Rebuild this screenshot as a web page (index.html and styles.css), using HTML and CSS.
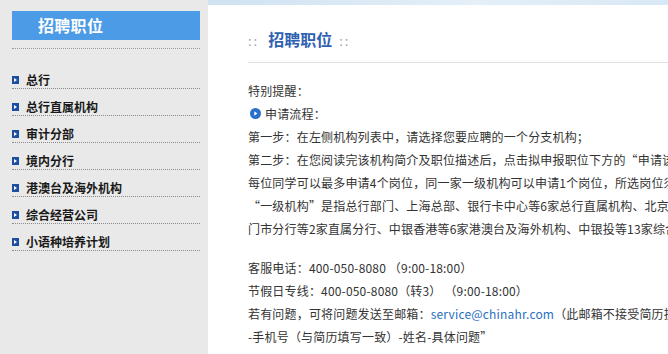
FILE: index.html
```html
<!DOCTYPE html>
<html lang="zh-CN">
<head>
<meta charset="utf-8">
<title>招聘职位</title>
<link rel="stylesheet" href="styles.css">
</head>
<body>
<div class="page">
  <aside class="sidebar">
    <div class="side-title">招聘职位</div>
    <div class="side-sep"></div>
    <ul class="menu">
      <li><span class="bullet"></span>总行</li>
      <li><span class="bullet"></span>总行直属机构</li>
      <li><span class="bullet"></span>审计分部</li>
      <li><span class="bullet"></span>境内分行</li>
      <li><span class="bullet"></span>港澳台及海外机构</li>
      <li><span class="bullet"></span>综合经营公司</li>
      <li><span class="bullet"></span>小语种培养计划</li>
    </ul>
  </aside>
  <main class="main">
    <div class="banner"></div>
    <div class="content">
      <h1 class="title"><span class="dots dots-l">::</span>招聘职位<span class="dots dots-r">::</span></h1>
      <div class="para">
        <p>特别提醒：</p>
        <p class="step-head"><span class="circle"><svg width="11" height="11" viewBox="0 0 11 11"><circle cx="5.5" cy="5.5" r="5.5" fill="#2a6fc9"/><path d="M4.3 3.2 L7.4 5.5 L4.3 7.8 Z" fill="#fff"/></svg></span>申请流程：</p>
        <p>第一步：在左侧机构列表中，请选择您要应聘的一个分支机构；</p>
        <p>第二步：在您阅读完该机构简介及职位描述后，点击拟申报职位下方的“申请该职位”按钮，填写并提交申请；</p>
        <p>每位同学可以最多申请4个岗位，同一家一级机构可以申请1个岗位，所选岗位须分属不同的一级机构。</p>
        <p>“一级机构”是指总行部门、上海总部、银行卡中心等6家总行直属机构、北京市分行等37家境内分行、深圳市分行和厦</p>
        <p>门市分行等2家直属分行、中银香港等6家港澳台及海外机构、中银投等13家综合经营公司。</p>
      </div>
      <div class="para">
        <p>客服电话：400-050-8080 （9:00-18:00）</p>
        <p>节假日专线：400-050-8080（转3） （9:00-18:00）</p>
        <p>若有问题，可将问题发送至邮箱：<a class="mail" href="#">service@chinahr.com</a>（此邮箱不接受简历投递，邮件标题请注明“学校-专业</p>
        <p>-手机号（与简历填写一致）-姓名-具体问题”</p>
      </div>
    </div>
  </main>
</div>
</body>
</html>
```
FILE: styles.css
```css
html, body {
  margin: 0;
  padding: 0;
  background: #fff;
  overflow: hidden;
  height: 100%;
}
body {
  font-family: "Noto Sans CJK SC", "Noto Sans", sans-serif;
  font-size: 12px;
  color: #333;
}
.page {
  display: flex;
  width: 1100px;
  min-height: 354px;
  height: 100%;
}
.sidebar {
  width: 208px;
  flex: none;
  background: #e9e9e9;
  padding: 11px 8px 0 12px;
  box-sizing: border-box;
}
.side-title {
  background: #4b9be6;
  color: #fff;
  font-weight: bold;
  font-size: 16px;
  height: 29px;
  line-height: 29px;
  padding-left: 26px;
  letter-spacing: 0.3px;
}
.side-sep {
  margin-top: 8px;
  border-top: 1px dotted #9a9a9a;
}
.menu {
  list-style: none;
  margin: 13px 0 0;
  padding: 0;
}
.menu li {
  display: flex;
  align-items: center;
  height: 27px;
  padding-top: 9px;
  box-sizing: border-box;
  line-height: 16px;
  font-weight: bold;
  font-size: 12px;
  color: #1a1a1a;
  border-bottom: 1px dotted #8a8a8a;
}
.bullet {
  position: relative;
  width: 7px;
  height: 8px;
  background: #1c4f9f;
  margin-right: 7px;
  flex: none;
}
.bullet::after {
  content: "";
  position: absolute;
  left: 2px;
  top: 2px;
  border-left: 3px solid #fff;
  border-top: 2px solid transparent;
  border-bottom: 2px solid transparent;
}
.main {
  flex: 1;
  display: flex;
  flex-direction: column;
}
.banner {
  height: 5px;
  background: linear-gradient(90deg, #cfe2f2 0%, #e4eff8 30%, #d6e7f4 55%, #eef5fb 80%, #dbe9f5 100%);
}
.content {
  padding-left: 40px;
}
.title {
  margin: 24px 0 0 0;
  padding: 0 0 11px 0;
  font-size: 16px;
  line-height: 20px;
  font-weight: bold;
  color: #2f62b0;
  border-bottom: 1px solid #e2e2e2;
}
.dots {
  color: #a0a8b2;
  font-weight: normal;
  font-size: 13px;
  letter-spacing: 2px;
}
.dots-l {
  margin-right: 9px;
}
.dots-r {
  margin-left: 7px;
}
.para {
  margin-top: 16px;
}
.para + .para {
  margin-top: 16px;
}
.para p {
  margin: 0;
  line-height: 23px;
  white-space: nowrap;
  letter-spacing: 0.18px;
}
.step-head {
  display: flex;
  align-items: center;
}
.circle {
  display: inline-flex;
  width: 11px;
  height: 11px;
  margin: 0 4px 0 2px;
}
.mail {
  color: #2a6fc0;
  text-decoration: none;
}
```
